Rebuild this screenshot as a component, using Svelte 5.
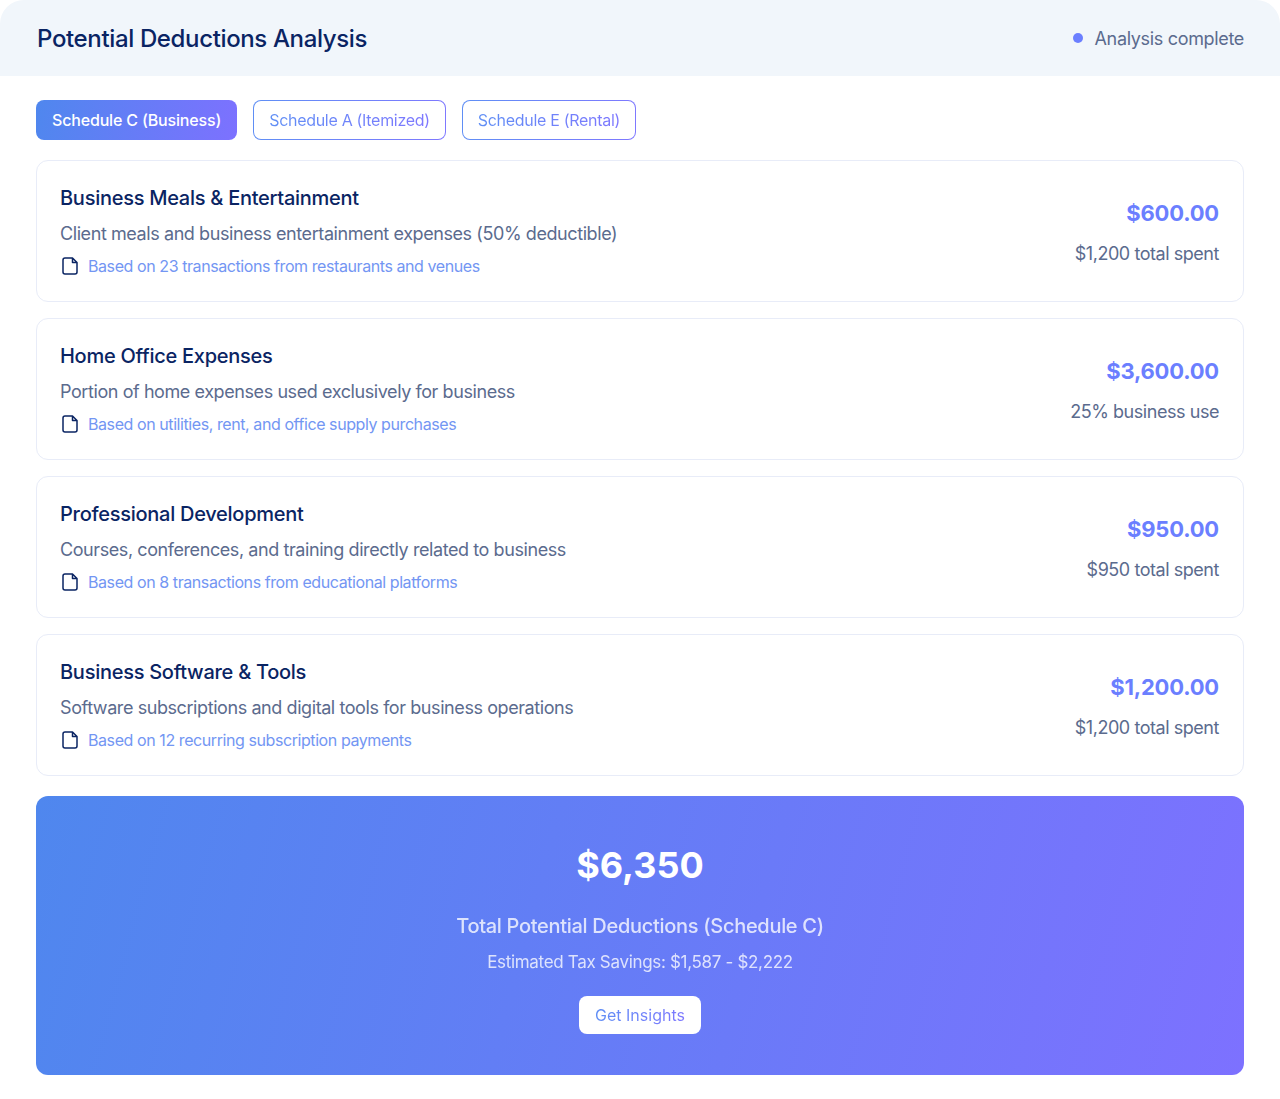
<script>
	const tabs = ['Schedule C (Business)', 'Schedule A (Itemized)', 'Schedule E (Rental)'];
	let active = $state(0);

	const items = [
		{
			title: 'Business Meals & Entertainment',
			desc: 'Client meals and business entertainment expenses (50% deductible)',
			source: 'Based on 23 transactions from restaurants and venues',
			amount: '$600.00',
			note: '$1,200 total spent'
		},
		{
			title: 'Home Office Expenses',
			desc: 'Portion of home expenses used exclusively for business',
			source: 'Based on utilities, rent, and office supply purchases',
			amount: '$3,600.00',
			note: '25% business use'
		},
		{
			title: 'Professional Development',
			desc: 'Courses, conferences, and training directly related to business',
			source: 'Based on 8 transactions from educational platforms',
			amount: '$950.00',
			note: '$950 total spent'
		},
		{
			title: 'Business Software & Tools',
			desc: 'Software subscriptions and digital tools for business operations',
			source: 'Based on 12 recurring subscription payments',
			amount: '$1,200.00',
			note: '$1,200 total spent'
		}
	];
</script>

<div class="panel">
	<header class="head">
		<h1>Potential Deductions Analysis</h1>
		<div class="status"><span class="dot"></span>Analysis complete</div>
	</header>

	<div class="body">
		<div class="tabs">
			{#each tabs as tab, i}
				<button class="tab" class:active={active === i} onclick={() => (active = i)}>
					<span class="tab-text">{tab}</span>
				</button>
			{/each}
		</div>

		<div class="list">
			{#each items as item}
				<div class="card">
					<div class="info">
						<h3>{item.title}</h3>
						<p class="desc">{item.desc}</p>
						<div class="source">
							<svg width="20" height="20" viewBox="0 0 20 20" fill="none">
								<path d="M12.5 2H5a2 2 0 0 0-2 2v12a2 2 0 0 0 2 2h10a2 2 0 0 0 2-2V6.5z M12.5 2v4.5H17" stroke="#0a2463" stroke-width="1.5" stroke-linejoin="round" stroke-linecap="round" />
							</svg>
							<span>{item.source}</span>
						</div>
					</div>
					<div class="figures">
						<div class="amount">{item.amount}</div>
						<div class="note">{item.note}</div>
					</div>
				</div>
			{/each}
		</div>

		<section class="summary">
			<div class="total">$6,350</div>
			<div class="label">Total Potential Deductions (Schedule C)</div>
			<div class="savings">Estimated Tax Savings: $1,587 - $2,222</div>
			<button class="insights"><span class="insights-text">Get Insights</span></button>
		</section>
	</div>
</div>

<style>
	:global(body) {
		background: #fff;
		font-family: Inter, 'Liberation Sans', sans-serif;
	}

	.panel {
		background: #fff;
	}

	.head {
		display: flex;
		align-items: center;
		justify-content: space-between;
		height: 76px;
		box-sizing: border-box;
		padding: 0 36px 0 37px;
		background: #f1f6fb;
		border-radius: 24px 24px 0 0;
	}

	h1 {
		margin: 0;
		font-size: 24px;
		font-weight: 500;
		letter-spacing: -0.36px;
		color: #0a2463;
	}

	.status {
		display: flex;
		align-items: center;
		gap: 12px;
		font-size: 18px;
		letter-spacing: -0.33px;
		color: #5b6b8e;
	}

	.dot {
		width: 10px;
		height: 10px;
		border-radius: 50%;
		background: #6b7fff;
	}

	.body {
		padding: 24px 36px;
	}

	.tabs {
		display: flex;
		gap: 16px;
		margin-bottom: 20px;
	}

	.tab {
		height: 40px;
		padding: 0 15px;
		box-sizing: border-box;
		border: 1px solid transparent;
		border-radius: 8px;
		background: linear-gradient(#fff, #fff) padding-box, linear-gradient(100deg, #5f8ff5, #7f78ff) border-box;
		font-family: inherit;
		font-size: 16px;
		letter-spacing: -0.3px;
	}

	.tab-text {
		background: linear-gradient(100deg, #5f8ff5, #7f78ff);
		-webkit-background-clip: text;
		background-clip: text;
		color: transparent;
	}

	.tab.active {
		border: none;
		padding: 0 16px;
		background: linear-gradient(100deg, #4f87ee, #7d71ff);
		font-weight: 500;
		letter-spacing: -0.17px;
	}

	.tab.active .tab-text {
		background: none;
		color: #fff;
	}

	.list {
		display: flex;
		flex-direction: column;
		gap: 16px;
	}

	.card {
		display: flex;
		align-items: center;
		justify-content: space-between;
		height: 142px;
		box-sizing: border-box;
		padding: 0 24px 0 23px;
		border: 1px solid #e8ecf8;
		border-radius: 12px;
	}

	h3 {
		margin: 0 0 13px;
		font-size: 20px;
		line-height: 24px;
		font-weight: 500;
		letter-spacing: -0.27px;
		color: #0a2463;
	}

	.desc {
		margin: 0 0 11px;
		font-size: 18px;
		line-height: 22px;
		letter-spacing: -0.42px;
		color: #5b6b8e;
	}

	.source {
		display: flex;
		align-items: center;
		gap: 8px;
		font-size: 16px;
		line-height: 20px;
		letter-spacing: -0.42px;
		color: #7396f3;
	}

	.figures {
		text-align: right;
	}

	.amount {
		font-size: 22px;
		line-height: 31px;
		font-weight: 700;
		letter-spacing: -0.2px;
		color: #6b7fff;
		margin-bottom: 14px;
	}

	.note {
		font-size: 18px;
		line-height: 22px;
		letter-spacing: -0.45px;
		color: #5b6b8e;
	}

	.summary {
		display: flex;
		flex-direction: column;
		align-items: center;
		height: 279px;
		box-sizing: border-box;
		margin-top: 20px;
		padding-top: 45px;
		border-radius: 12px;
		background: linear-gradient(105deg, #4f87ee, #7d71ff);
		color: #fff;
	}

	.total {
		font-size: 36px;
		line-height: 48px;
		font-weight: 700;
		margin-bottom: 25px;
	}

	.label {
		font-size: 20px;
		line-height: 24px;
		font-weight: 500;
		letter-spacing: -0.3px;
		opacity: 0.78;
		margin-bottom: 13px;
	}

	.savings {
		font-size: 17px;
		line-height: 22px;
		letter-spacing: -0.32px;
		opacity: 0.78;
		margin-bottom: 23px;
	}

	.insights {
		height: 38px;
		padding: 0 16px;
		border: none;
		border-radius: 8px;
		background: #fff;
		font-family: inherit;
		font-size: 16px;
	}

	.insights-text {
		background: linear-gradient(100deg, #5f8ff5, #7f78ff);
		-webkit-background-clip: text;
		background-clip: text;
		color: transparent;
	}
</style>
